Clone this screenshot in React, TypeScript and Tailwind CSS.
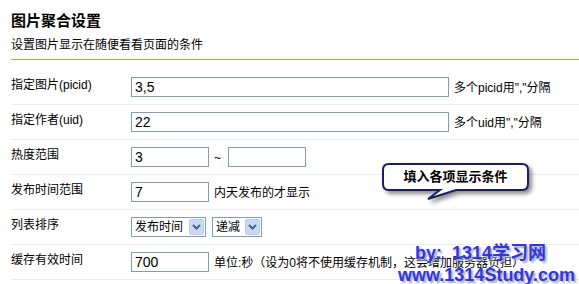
import React from 'react';

const inputCls =
  'h-[20px] border border-[#7f9db9] bg-white px-[3px] text-[14px] leading-[18px] text-black outline-none';

function Select({ label, width }: { label: string; width: string }) {
  return (
    <div className={`flex h-[20px] items-center justify-between border border-[#7f9db9] bg-white pl-[3px] pr-[1px] ${width}`}>
      <span className="text-[12px] leading-[16px]">{label}</span>
      <span className="flex h-[16px] w-[15px] items-center justify-center rounded-[2px] border border-[#b9cbf3] bg-[#c8d8f8]">
        <svg width="9" height="6" viewBox="0 0 9 6">
          <path d="M1 1 L4.5 4.5 L8 1" fill="none" stroke="#4d6185" strokeWidth="2" />
        </svg>
      </span>
    </div>
  );
}

function Row({ label, children }: { label: string; children: React.ReactNode }) {
  return (
    <div className="flex h-[35px] border-b border-[#ececec]">
      <div className="w-[120px] pt-[7px] text-[12px] leading-[16px]">{label}</div>
      <div className="flex items-start gap-[5px] pt-[7px]">{children}</div>
    </div>
  );
}

export default function App() {
  return (
    <div className="relative h-[284px] w-[579px] overflow-hidden bg-white font-['Liberation_Sans','Noto_Sans_CJK_SC',sans-serif] text-black">
      <div className="pl-[11px]">
        <h1 className="pt-[12px] text-[15px] font-bold leading-[18px]">图片聚合设置</h1>
        <p className="mt-[7px] text-[12px] leading-[16px]">设置图片显示在随便看看页面的条件</p>
        <div className="mt-[6px] h-px bg-[#f09a2a]" />

        <div className="mt-[10px]">
          <Row label="指定图片(picid)">
            <input className={`${inputCls} w-[318px]`} defaultValue="3,5" />
            <span className="pt-[3px] text-[12px] leading-[16px]">多个picid用","分隔</span>
          </Row>
          <Row label="指定作者(uid)">
            <input className={`${inputCls} w-[318px]`} defaultValue="22" />
            <span className="pt-[3px] text-[12px] leading-[16px]">多个uid用","分隔</span>
          </Row>
          <Row label="热度范围">
            <input className={`${inputCls} w-[78px]`} defaultValue="3" />
            <span className="pt-[3px] text-[12px] leading-[16px]">~</span>
            <input className={`${inputCls} ml-[2px] w-[78px]`} defaultValue="" />
          </Row>
          <Row label="发布时间范围">
            <input className={`${inputCls} w-[78px]`} defaultValue="7" />
            <span className="pt-[3px] text-[12px] leading-[16px]">内天发布的才显示</span>
          </Row>
          <Row label="列表排序">
            <div className="flex gap-[6px]">
              <Select label="发布时间" width="w-[75px]" />
              <Select label="递减" width="w-[50px]" />
            </div>
          </Row>
          <Row label="缓存有效时间">
            <input className={`${inputCls} w-[78px]`} defaultValue="700" />
            <span className="whitespace-nowrap pt-[3px] text-[12px] leading-[16px]">
              单位:秒（设为0将不使用缓存机制，这会增加服务器负担）
            </span>
          </Row>
        </div>
      </div>

      {/* callout */}
      <div className="absolute left-[382px] top-[163px] h-[40px] w-[152px]">
        <svg width="152" height="40" className="absolute left-0 top-0 drop-shadow-[3px_3px_2px_rgba(0,0,0,0.45)]">
          <path
            d="M7 1 H140 Q146 1 146 7 V21 Q146 27 140 27 H74 L46 36 L58 27 H7 Q1 27 1 21 V7 Q1 1 7 1 Z"
            fill="#fff"
            stroke="#14206e"
            strokeWidth="2"
          />
        </svg>
        <div className="absolute left-0 top-0 flex h-[28px] w-[147px] items-center justify-center text-[13px] font-bold leading-[16px]">
          填入各项显示条件
        </div>
      </div>

      {/* watermark */}
      <div className="absolute left-[398px] top-[242px] text-[18px] font-bold leading-[22px] text-[#3535d8] [text-shadow:2px_2px_2px_#9aa6d6]">
        <div className="pl-[17px]">by:&nbsp; 1314学习网</div>
        <div>www.1314Study.com</div>
      </div>
    </div>
  );
}
